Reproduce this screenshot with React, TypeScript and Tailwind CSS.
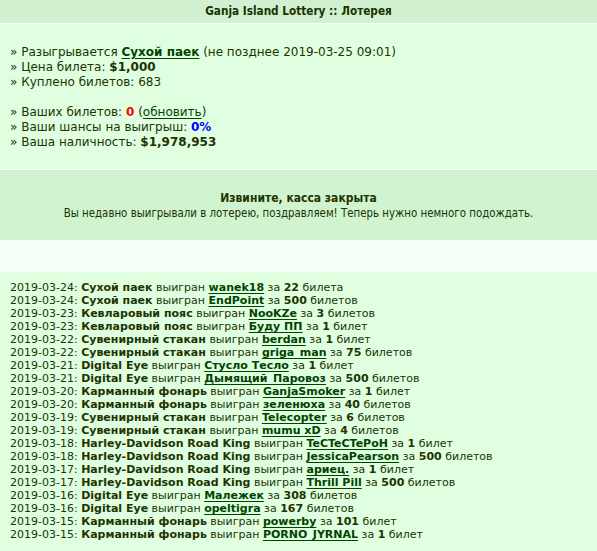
import React from "react";

type Win = {
  date: string;
  item: string;
  user: string;
  count: string;
  word: string;
};

const wins: Win[] = [
  { date: "2019-03-24", item: "Сухой паек", user: "wanek18", count: "22", word: "билета" },
  { date: "2019-03-24", item: "Сухой паек", user: "EndPoint", count: "500", word: "билетов" },
  { date: "2019-03-23", item: "Кевларовый пояс", user: "NooKZe", count: "3", word: "билетов" },
  { date: "2019-03-23", item: "Кевларовый пояс", user: "Буду ПП", count: "1", word: "билет" },
  { date: "2019-03-22", item: "Сувенирный стакан", user: "berdan", count: "1", word: "билет" },
  { date: "2019-03-22", item: "Сувенирный стакан", user: "griga_man", count: "75", word: "билетов" },
  { date: "2019-03-21", item: "Digital Eye", user: "Стусло Тесло", count: "1", word: "билет" },
  { date: "2019-03-21", item: "Digital Eye", user: "Дымящий_Паровоз", count: "500", word: "билетов" },
  { date: "2019-03-20", item: "Карманный фонарь", user: "GanjaSmoker", count: "1", word: "билет" },
  { date: "2019-03-20", item: "Карманный фонарь", user: "зеленюха", count: "40", word: "билетов" },
  { date: "2019-03-19", item: "Сувенирный стакан", user: "Telecopter", count: "6", word: "билетов" },
  { date: "2019-03-19", item: "Сувенирный стакан", user: "mumu xD", count: "4", word: "билетов" },
  { date: "2019-03-18", item: "Harley-Davidson Road King", user: "TeCTeCTePoH", count: "1", word: "билет" },
  { date: "2019-03-18", item: "Harley-Davidson Road King", user: "JessicaPearson", count: "500", word: "билетов" },
  { date: "2019-03-17", item: "Harley-Davidson Road King", user: "ариец.", count: "1", word: "билет" },
  { date: "2019-03-17", item: "Harley-Davidson Road King", user: "Thrill Pill", count: "500", word: "билетов" },
  { date: "2019-03-16", item: "Digital Eye", user: "Малежек", count: "308", word: "билетов" },
  { date: "2019-03-16", item: "Digital Eye", user: "opeltigra", count: "167", word: "билетов" },
  { date: "2019-03-15", item: "Карманный фонарь", user: "powerby", count: "101", word: "билет" },
  { date: "2019-03-15", item: "Карманный фонарь", user: "PORNO_JYRNAL", count: "1", word: "билет" },
];

const link = "font-bold text-[#004400] underline underline-offset-2";

export default function App() {
  return (
    <div className="min-h-[551px] w-[597px] bg-[#e0ffe0] font-['DejaVu_Sans',sans-serif] text-[12px] text-[#223300]">
      <div className="flex h-[24px] items-center justify-center border-b border-white bg-[#d0f0d0] font-['DejaVu_Sans_Condensed','DejaVu_Sans',sans-serif] text-[11.7px] font-bold text-[#1a3300]">
        Ganja Island Lottery :: Лотерея
      </div>

      <div className="border-b border-white px-[10px] pt-[21px] pb-[19px] leading-[15px]">
        <div>
          » Разыгрывается <a className={link}>Сухой паек</a> (не позднее 2019-03-25 09:01)
        </div>
        <div>
          » Цена билета: <b>$1,000</b>
        </div>
        <div>» Куплено билетов: 683</div>
        <div className="h-[15px]" />
        <div>
          » Ваших билетов: <b className="text-[#ff0000]">0</b> (
          <a className="text-[#004400] underline underline-offset-2">обновить</a>)
        </div>
        <div>
          » Ваши шансы на выигрыш: <b className="text-[#0000ff]">0%</b>
        </div>
        <div>
          » Ваша наличность: <b>$1,978,953</b>
        </div>
      </div>

      <div className="bg-[#d0f4d0] pt-[21px] pb-[19px] text-center font-['DejaVu_Sans_Condensed','DejaVu_Sans',sans-serif] text-[11.4px] leading-[15px]">
        <div className="text-[12px] font-bold">Извините, касса закрыта</div>
        <div>Вы недавно выигрывали в лотерею, поздравляем! Теперь нужно немного подождать.</div>
      </div>

      <div className="h-[32px] bg-[#f5fff5]" />

      <div className="px-[10px] pt-[9px] pb-[10px] text-[11px] leading-[13px]">
        {wins.map((w, i) => (
          <div key={i} className="whitespace-nowrap">
            {w.date}: <b>{w.item}</b> выигран <a className={link}>{w.user}</a> за <b>{w.count}</b> {w.word}
          </div>
        ))}
      </div>
    </div>
  );
}
